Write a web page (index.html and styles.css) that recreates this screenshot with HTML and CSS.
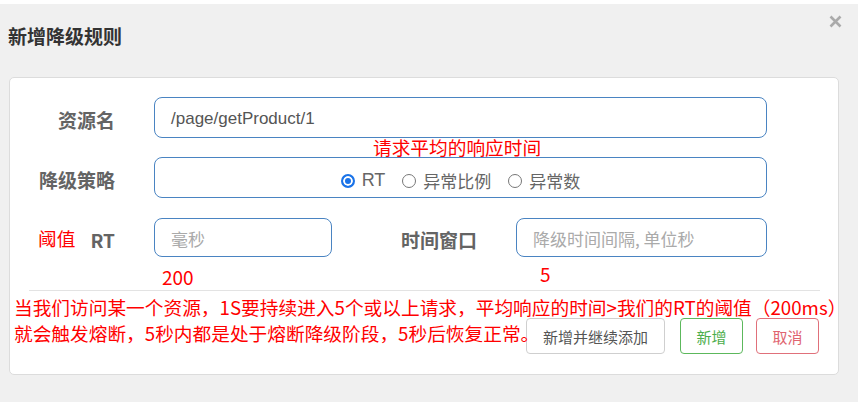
FILE: index.html
```html
<!DOCTYPE html>
<html lang="zh-CN">
<head>
<meta charset="utf-8">
<title>新增降级规则</title>
<link rel="stylesheet" href="styles.css">
</head>
<body>
<div class="page">
  <div class="header">
    <h1 class="title">新增降级规则</h1>
    <svg class="close" width="13" height="13" viewBox="0 0 13 13"><path d="M1.5 1.5 L11.5 11.5 M11.5 1.5 L1.5 11.5" stroke="#aaa" stroke-width="2.6" stroke-linecap="butt"/></svg>
  </div>
  <div class="card">
    <div class="row row-1">
      <label class="label">资源名</label>
      <div class="field field-wide"><span class="value">/page/getProduct/1</span></div>
    </div>
    <div class="row row-2">
      <label class="label">降级策略</label>
      <div class="field field-wide field-radios">
        <span class="radio checked"></span><span class="radio-text latin">RT</span>
        <span class="radio"></span><span class="radio-text">异常比例</span>
        <span class="radio"></span><span class="radio-text">异常数</span>
      </div>
    </div>
    <div class="row row-3">
      <label class="label">RT</label>
      <div class="field field-rt"><span class="placeholder">毫秒</span></div>
      <label class="label label-window">时间窗口</label>
      <div class="field field-window"><span class="placeholder">降级时间间隔, 单位秒</span></div>
    </div>
    <div class="divider"></div>
    <div class="actions">
      <button class="btn btn-default">新增并继续添加</button>
      <button class="btn btn-success">新增</button>
      <button class="btn btn-danger">取消</button>
    </div>
  </div>

  <div class="note note-avg">请求平均的响应时间</div>
  <div class="note note-threshold">阈值</div>
  <div class="note note-200">200</div>
  <div class="note note-5">5</div>
  <div class="note note-long">当我们访问某一个资源，1S要持续进入5个或以上请求，平均响应的时间&gt;我们的RT的阈值（200ms）<br>就会触发熔断，5秒内都是处于熔断降级阶段，5秒后恢复正常。</div>
</div>
</body>
</html>
```

FILE: styles.css
```css
* { box-sizing: border-box; }

body {
  margin: 0;
  background: #f0f0f0;
  font-family: "Noto Sans CJK SC", "Liberation Sans", sans-serif;
}

.page {
  position: relative;
  width: 858px;
  height: 402px;
  border-top: 4px solid #ffffff;
}

.header {
  height: 73px;
  display: flex;
  justify-content: space-between;
  align-items: flex-start;
  padding: 0 16px 0 8px;
}

.title {
  margin: 20px 0 0 0;
  font-size: 19px;
  line-height: 24px;
  font-weight: 700;
  color: #333;
}

.close {
  margin-top: 11px;
}

.card {
  margin-left: 9px;
  width: 830px;
  height: 298px;
  background: #fff;
  border: 1px solid #dcdcdc;
  border-radius: 5px;
  padding-top: 19px;
}

.row {
  display: flex;
  align-items: center;
}

.row-2 { margin-top: 19px; }
.row-3 { margin-top: 20px; }

.label {
  width: 105px;
  text-align: right;
  margin-right: 39px;
  font-size: 19px;
  font-weight: 700;
  color: #646464;
  padding-top: 4px;
}

.label-window {
  width: 145px;
}

.field {
  border: 1px solid #4a84c2;
  border-radius: 8px;
  height: 41px;
  display: flex;
  align-items: center;
  padding-left: 16px;
  background: #fff;
}

.field-wide { width: 613px; }
.field-rt { width: 178px; height: 39px; }
.field-window { width: 251px; height: 39px; }

.value {
  font-family: "Liberation Sans", sans-serif;
  font-size: 17px;
  color: #555;
  padding-top: 2px;
}

.placeholder {
  font-size: 17px;
  color: #aaa;
  padding-top: 2px;
}

.field-radios {
  justify-content: center;
  padding-left: 0;
  padding-top: 6px;
}

.radio {
  width: 14px;
  height: 14px;
  border: 1px solid #777;
  border-radius: 50%;
  margin-right: 7px;
  background: #fff;
}

.radio.checked {
  border: 2px solid #1a73e8;
  background: #1a73e8;
  box-shadow: inset 0 0 0 2px #fff;
}

.radio-text {
  font-size: 17px;
  color: #666;
  margin-right: 17px;
}

.radio-text.latin {
  font-family: "Liberation Sans", sans-serif;
  font-size: 18px;
}

.radio-text:last-child { margin-right: 0; }

.divider {
  margin: 33px 0 0 19px;
  width: 791px;
  height: 1px;
  background: #e3e3e3;
}

.actions {
  display: flex;
  justify-content: flex-end;
  padding-right: 19px;
  margin-top: 27px;
}

.btn {
  height: 36px;
  border-radius: 4px;
  background: #fff;
  font-family: "Noto Sans CJK SC", sans-serif;
  font-size: 15px;
  padding: 0;
  cursor: pointer;
}

.btn-default {
  width: 139px;
  border: 1px solid #cfcfcf;
  color: #555;
}

.btn-success {
  width: 63px;
  margin-left: 15px;
  border: 1px solid #5cb85c;
  color: #4cae4c;
}

.btn-danger {
  width: 63px;
  margin-left: 13px;
  border: 1px solid #e0707a;
  color: #e06470;
}

.note {
  position: absolute;
  color: #ff0000;
  font-size: 18.7px;
  line-height: 26px;
  white-space: nowrap;
}

.note-avg { left: 373px; top: 130px; }
.note-threshold { left: 38px; top: 221px; }
.note-200 { left: 162px; top: 260px; font-size: 19px; }
.note-5 { left: 540px; top: 257px; font-size: 19px; }
.note-long { left: 14px; top: 290px; }
```
